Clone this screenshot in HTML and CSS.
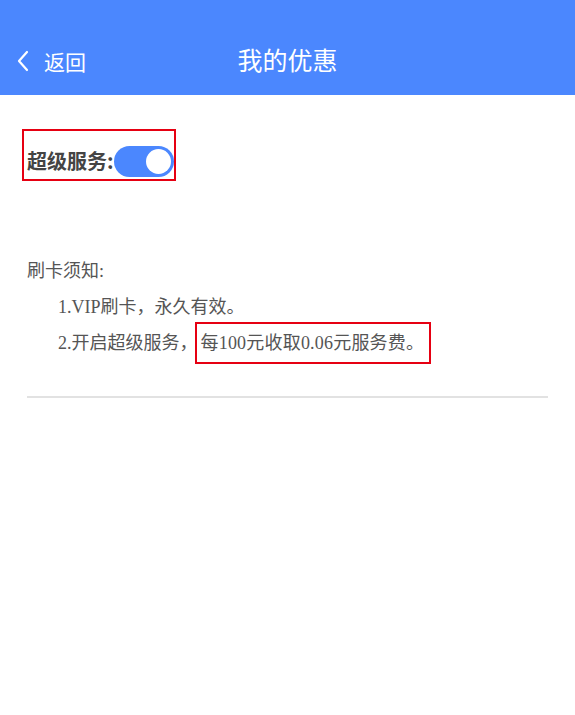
FILE: index.html
```html
<!DOCTYPE html>
<html>
<head>
<meta charset="utf-8">
<link rel="stylesheet" href="styles.css">
</head>
<body>
<div class="header">
  <div class="back">
    <svg class="chev" width="14" height="22" viewBox="0 0 14 22"><path d="M11 2 L3 11 L11 20" fill="none" stroke="#fff" stroke-width="2.2" stroke-linecap="round" stroke-linejoin="round"/></svg>
    <span class="back-text">返回</span>
  </div>
  <div class="title">我的优惠</div>
</div>
<div class="content">
  <div class="super-box">
    <span class="super-label">超级服务:</span>
    <span class="toggle"><span class="knob"></span></span>
  </div>
  <div class="notice">
    <div class="notice-title">刷卡须知:</div>
    <div class="item">1.VIP刷卡，永久有效。</div>
    <div class="item">2.开启超级服务，<span class="hl">每100元收取0.06元服务费。</span></div>
  </div>
  <div class="divider"></div>
</div>
</body>
</html>
```
FILE: styles.css
```css
html, body { margin: 0; padding: 0; background: #fff; }
body { width: 575px; height: 715px; overflow: hidden; }
.header {
  height: 95px;
  background: #4b87fe;
  position: relative;
  color: #fff;
  font-family: "Noto Sans CJK SC", "Noto Sans", sans-serif;
}
.back {
  position: absolute;
  left: 16px;
  top: 47px;
  display: flex;
  align-items: center;
}
.chev { display: block; }
.back-text { margin-left: 14px; font-size: 21px; line-height: 28px; }
.title {
  text-align: center;
  font-size: 25px;
  line-height: 30px;
  padding-top: 44px;
}
.content { padding: 34px 27px 0 27px; }
.super-box {
  display: inline-flex;
  align-items: center;
  margin-left: -5px;
  border: 2px solid #e60012;
  padding: 14px 0 2px 3px;
  height: 32px;
}
.super-label {
  font-family: "Noto Sans CJK SC", sans-serif;
  font-weight: bold;
  font-size: 20px;
  color: #444;
  line-height: 32px;
}
.toggle {
  width: 60px;
  height: 31px;
  border-radius: 16px;
  background: #4b87fe;
  position: relative;
  margin-left: 0;
}
.knob {
  position: absolute;
  right: 3px;
  top: 3px;
  width: 25px;
  height: 25px;
  border-radius: 50%;
  background: #fff;
}
.notice {
  margin-top: 78px;
  font-family: "Liberation Serif", "Noto Sans CJK SC", serif;
  font-size: 18px;
  color: #555;
}
.notice-title { line-height: 24px; }
.item { padding-left: 31px; line-height: 24px; margin-top: 12px; }
.hl {
  border: 2px solid #e60012;
  padding: 9px 5px 9px 4px;
  margin-left: -3px;
  letter-spacing: 0.2px;
}
.divider {
  margin-top: 41px;
  height: 2px;
  background: #e2e2e2;
}
```
